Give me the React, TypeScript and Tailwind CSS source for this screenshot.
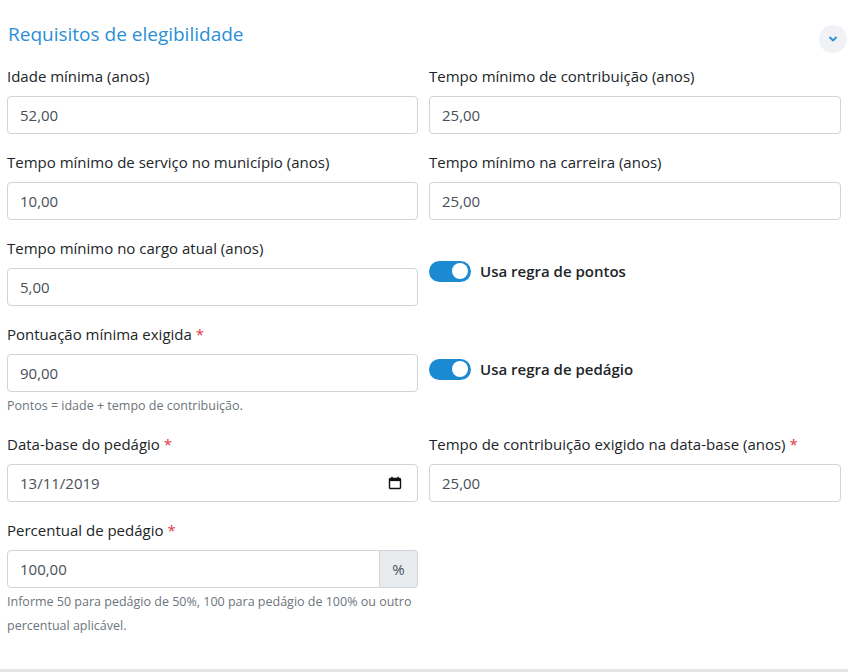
import React from 'react';

const font = { fontFamily: '"Open Sans", "Noto Sans", sans-serif' };

interface FieldProps {
  label: string;
  value: string;
  required?: boolean;
  suffix?: string;
  help?: React.ReactNode;
  helpClass?: string;
  date?: boolean;
}

const CalendarIcon: React.FC = () => (
  <svg width="14" height="14" viewBox="0 0 14 14" fill="none" aria-hidden>
    <rect x="1.5" y="2.5" width="11" height="10" rx="1" stroke="#111" strokeWidth="1.4" />
    <rect x="1.5" y="2.5" width="11" height="2.6" fill="#111" />
    <line x1="4" y1="0.8" x2="4" y2="2.8" stroke="#111" strokeWidth="1.4" />
    <line x1="10" y1="0.8" x2="10" y2="2.8" stroke="#111" strokeWidth="1.4" />
  </svg>
);

const Field: React.FC<FieldProps> = ({ label, value, required, suffix, help, helpClass, date }) => (
  <div className="flex flex-col">
    <label className="text-[15px] leading-6 text-[#212529] mb-2">
      {label}
      {required && <span className="text-[#dc3545]"> *</span>}
    </label>
    <div className="flex h-[38px]">
      <div
        className={
          'flex flex-1 items-center justify-between border border-[#ced4da] bg-white pl-3 pr-[15px] text-[15px] text-[#495057] ' +
          (suffix ? 'rounded-l-[4px]' : 'rounded-[4px]')
        }
      >
        <span>{value}</span>
        {date && <CalendarIcon />}
      </div>
      {suffix && (
        <div className="flex w-[38px] items-center justify-center rounded-r-[4px] border border-l-0 border-[#ced4da] bg-[#e9ecef] text-[15px] text-[#495057]">
          {suffix}
        </div>
      )}
    </div>
    {help && <div className={'text-[12.5px] text-[#6c757d] ' + (helpClass || 'mt-1 leading-5')}>{help}</div>}
  </div>
);

const Toggle: React.FC<{ label: string }> = ({ label }) => (
  <div className="flex items-center gap-[9px]">
    <div className="flex h-[21px] w-[42px] items-center justify-end rounded-full bg-[#1c8ad3] pr-[3px]">
      <div className="h-[16px] w-[16px] rounded-full bg-white" />
    </div>
    <span className="text-[15px] font-semibold text-[#212529]">{label}</span>
  </div>
);

export default function App() {
  return (
    <div className="w-[848px] h-[672px] bg-white flex flex-col overflow-hidden" style={font}>
      <div className="flex-1 px-[7px] pt-[22px]">
        <div className="flex items-start justify-between mb-[11px]">
          <h2 className="text-[19px] leading-6 text-[#2a8fd7] pl-px">Requisitos de elegibilidade</h2>
          <button className="mt-[3px] -mr-[6px] flex h-7 w-7 items-center justify-center rounded-full bg-[#f0f2f5]">
            <svg width="10" height="10" viewBox="0 0 10 10" fill="none" aria-hidden>
              <path d="M2 3.5 L5 6.5 L8 3.5" stroke="#2a8fd7" strokeWidth="1.8" strokeLinecap="round" strokeLinejoin="round" />
            </svg>
          </button>
        </div>

        <div className="grid grid-cols-[411px_412px] gap-x-[11px] gap-y-4 items-center">
          <Field label="Idade mínima (anos)" value="52,00" />
          <Field label="Tempo mínimo de contribuição (anos)" value="25,00" />

          <Field label="Tempo mínimo de serviço no município (anos)" value="10,00" />
          <Field label="Tempo mínimo na carreira (anos)" value="25,00" />

          <Field label="Tempo mínimo no cargo atual (anos)" value="5,00" />
          <Toggle label="Usa regra de pontos" />

          <Field
            label="Pontuação mínima exigida"
            required
            value="90,00"
            help="Pontos = idade + tempo de contribuição."
          />
          <Toggle label="Usa regra de pedágio" />

          <Field label="Data-base do pedágio" required value="13/11/2019" date />
          <Field label="Tempo de contribuição exigido na data-base (anos)" required value="25,00" />

          <Field
            label="Percentual de pedágio"
            required
            value="100,00"
            suffix="%"
            helpClass="mt-[2px] leading-6"
            help={
              <>
                Informe 50 para pedágio de 50%, 100 para pedágio de 100% ou outro
                <br />
                percentual aplicável.
              </>
            }
          />
          <div />
        </div>
      </div>
      <div className="h-[3px] bg-[#e3e3e3]" />
    </div>
  );
}
